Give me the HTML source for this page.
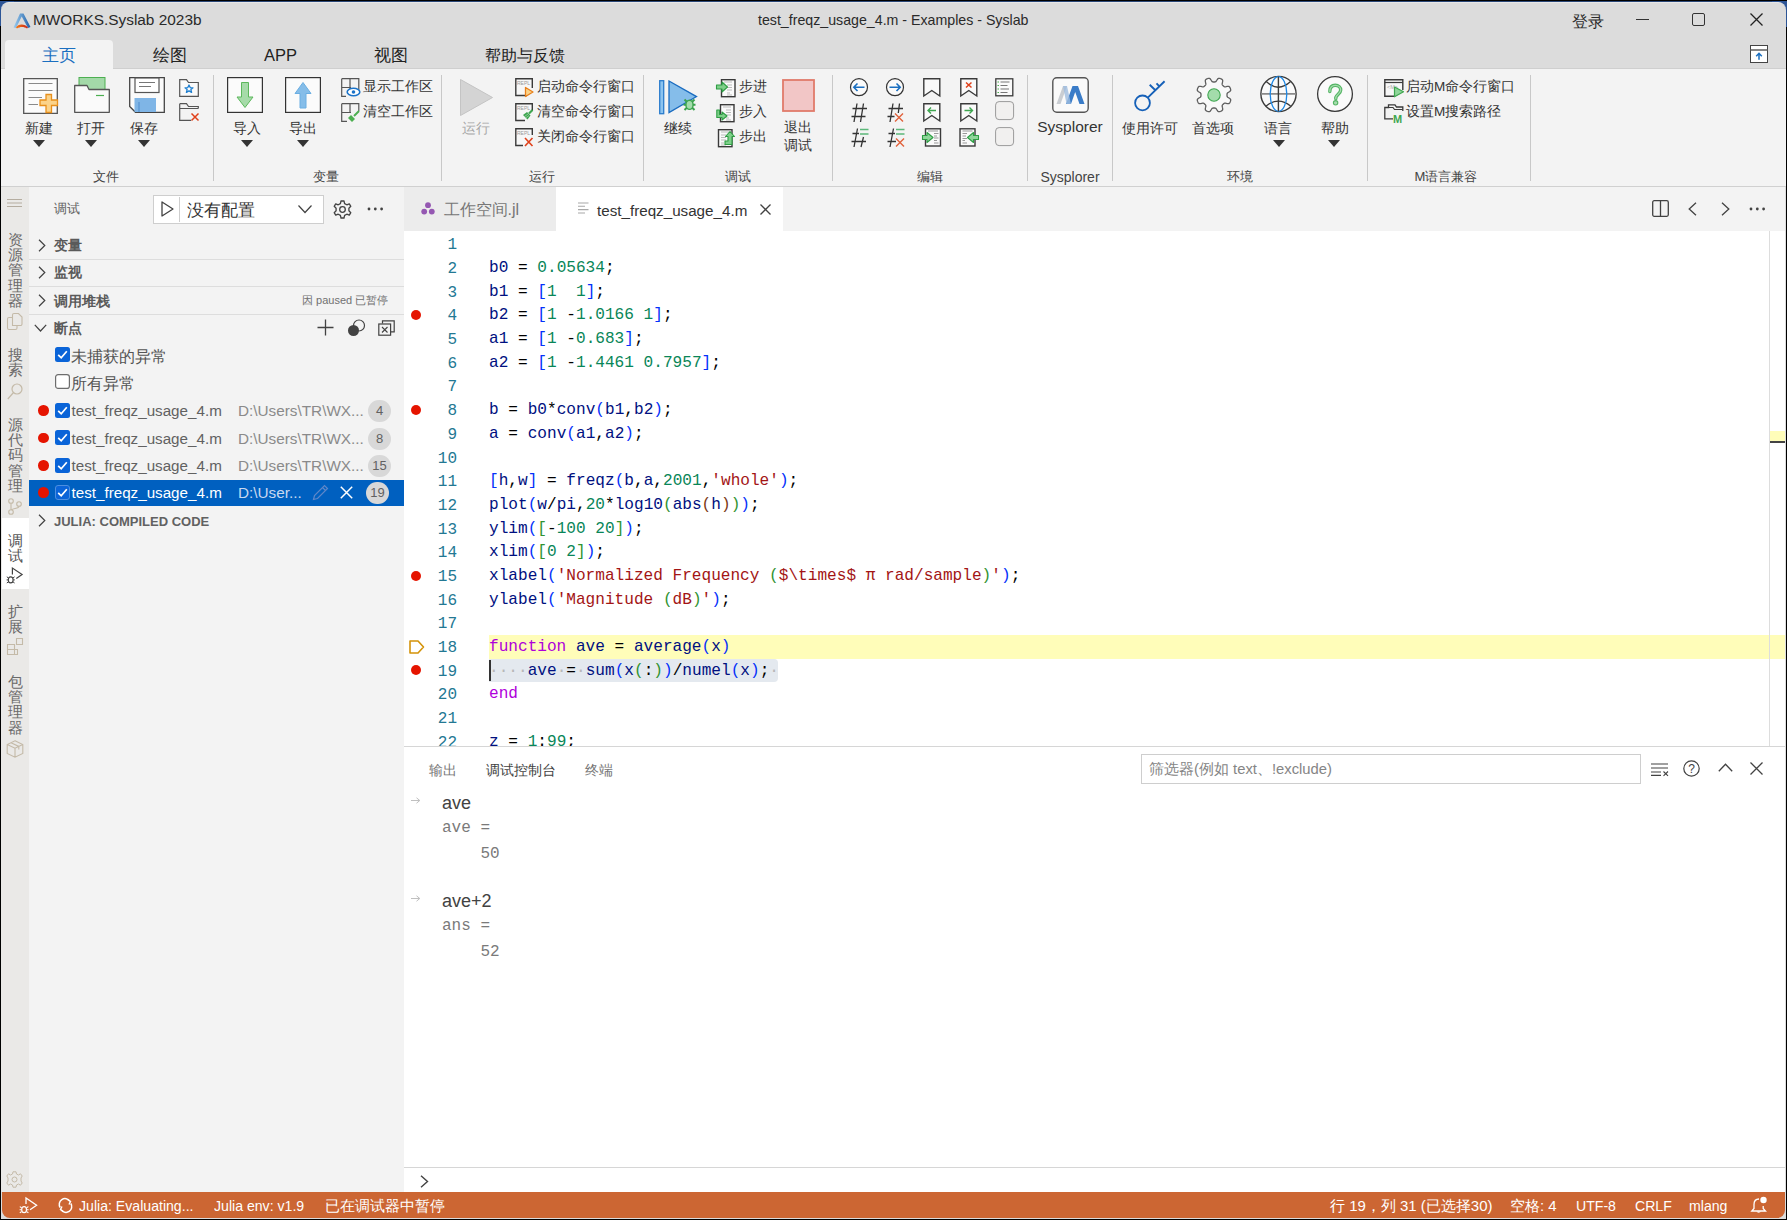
<!DOCTYPE html>
<html><head><meta charset="utf-8">
<style>
*{margin:0;padding:0;box-sizing:border-box}
html,body{width:1787px;height:1220px;overflow:hidden;background:#000}
body{font-family:"Liberation Sans",sans-serif;color:#222;position:relative}
.a{position:absolute}
.t{position:absolute;white-space:nowrap;line-height:1}
.c{position:absolute;white-space:nowrap;line-height:1;text-align:center;width:120px}
svg{position:absolute;overflow:visible}
.rib{font-size:13.5px;color:#333}
.gl{font-size:13px;color:#444}
.sep{position:absolute;width:1px;background:#c8c8c8;top:75px;height:106px}
.tri{position:absolute;width:0;height:0;border-left:6px solid transparent;border-right:6px solid transparent;border-top:7px solid #333}
.code{font-family:"Liberation Mono",monospace;font-size:16.1px;white-space:pre;position:absolute;left:489px;line-height:23.68px;height:23.68px}
.ln{font-family:"Liberation Mono",monospace;font-size:16px;position:absolute;width:60px;left:397px;text-align:right;color:#237893;line-height:23.68px}
.id{color:#001080}.nu{color:#098658}.br{color:#0431fa}.g2{color:#319331}.g3{color:#7b3814}.st{color:#a31515}.kw{color:#af00db}.pu{color:#000}.ws{color:#b8b8b8}
.bp{position:absolute;left:411px;width:10px;height:10px;border-radius:50%;background:#e51400}
</style></head><body>
<div class="a" style="left:0;top:1px;width:1787px;height:2px;background:#2a4878"></div>
<div class="a" style="left:0;top:1px;width:14px;height:25px;background:#2d5596"></div>
<div class="a" style="left:1772px;top:1px;width:15px;height:26px;background:#2d5596"></div>
<div class="a" style="left:1px;top:2px;width:1785px;height:1217px;background:#dcdcdc;border-radius:8px 8px 0 0;border-top:1px solid #e8e8e8"></div>
<!-- title bar -->
<svg style="left:13px;top:13px" width="18" height="17" viewBox="0 0 18 17">
 <defs><linearGradient id="lg1" x1="0" x2="1"><stop offset="0" stop-color="#9ccdf0"/><stop offset="1" stop-color="#1f5fa8"/></linearGradient>
 <linearGradient id="lg2" x1="0" x2="1"><stop offset="0" stop-color="#f57b14"/><stop offset="1" stop-color="#c8221b"/></linearGradient></defs>
 <path d="M7 0.5 L10.5 0.5 L17.5 14 L15 15 L8.7 3.5 L3 15 L0.5 14.5 Z" fill="url(#lg1)"/>
 <path d="M3 14.5 C5 10.5 12 10.5 15 14.5 L14 15.5 C11 13.5 7 13.5 4 15.5 Z" fill="url(#lg2)"/>
</svg>
<div class="t" style="left:33px;top:12px;font-size:15.4px;color:#2a2a2a">MWORKS.Syslab 2023b</div>
<div class="t" style="left:758px;top:13px;font-size:14.2px;color:#2a2a2a">test_freqz_usage_4.m - Examples - Syslab</div>
<div class="t" style="left:1572px;top:14px;font-size:16px;color:#2a2a2a">登录</div>
<div class="a" style="left:1636px;top:19px;width:13px;height:1px;background:#333"></div>
<div class="a" style="left:1692px;top:13px;width:13px;height:13px;border:1px solid #333;border-radius:2px"></div>
<svg style="left:1750px;top:13px" width="13" height="13"><path d="M0.5 0.5L12.5 12.5M12.5 0.5L0.5 12.5" stroke="#222" stroke-width="1.3"/></svg>
<!-- ribbon tabs -->
<div class="a" style="left:1px;top:68px;width:1785px;height:1px;background:#cfcfcf"></div>
<div class="a" style="left:5px;top:40px;width:108px;height:30px;background:#f3f3f3;border-radius:4px 4px 0 0"></div>
<div class="t" style="left:42px;top:46.5px;font-size:16.5px;color:#1a6fc0">主页</div>
<div class="t" style="left:153px;top:46.5px;font-size:16.5px;color:#222">绘图</div>
<div class="t" style="left:264px;top:47px;font-size:16.5px;color:#222">APP</div>
<div class="t" style="left:374px;top:46.5px;font-size:16.5px;color:#222">视图</div>
<div class="t" style="left:485px;top:47px;font-size:16.4px;color:#222">帮助与反馈</div>
<svg style="left:1750px;top:45px" width="18" height="18" viewBox="0 0 18 18"><rect x="0.5" y="0.5" width="17" height="17" fill="#fff" stroke="#444"/><path d="M0.5 5H17.5" stroke="#666" stroke-width="1.6"/><path d="M9 14.8V8.3M6.2 11.2L9 8.3L11.8 11.2" stroke="#1a6fc0" stroke-width="1.5" fill="none"/></svg>
<!-- ribbon body -->
<div class="a" style="left:1px;top:69px;width:1785px;height:118px;background:#f3f3f3;border-bottom:1px solid #d0d0d0"></div>
<div class="sep" style="left:213px"></div>
<div class="sep" style="left:441px"></div>
<div class="sep" style="left:643px"></div>
<div class="sep" style="left:832px"></div>
<div class="sep" style="left:1027px"></div>
<div class="sep" style="left:1112px"></div>
<div class="sep" style="left:1367px"></div>
<div class="sep" style="left:1530px"></div>
<!-- group labels -->
<div class="c gl" style="left:46px;top:170px">文件</div>
<div class="c gl" style="left:266px;top:170px">变量</div>
<div class="c gl" style="left:482px;top:170px">运行</div>
<div class="c gl" style="left:678px;top:170px">调试</div>
<div class="c gl" style="left:870px;top:170px">编辑</div>
<div class="c gl" style="left:1010px;top:169.5px;font-size:14px">Sysplorer</div>
<div class="c gl" style="left:1180px;top:170px">环境</div>
<div class="c gl" style="left:1386px;top:170px">M语言兼容</div>
<!-- file group -->
<svg style="left:23px;top:78px" width="36" height="36" viewBox="0 0 36 36">
 <path d="M0.7 0.7H34.3V35.3H0.7Z" fill="#fbfbfb" stroke="#555" stroke-width="1.3"/>
 <path d="M5.5 5.5H29.5M5.5 12.5H29.5M5.5 19.5H19M5.5 26.5H15" stroke="#8a8a8a" stroke-width="1.2"/>
 <path d="M23 16.5H28.5V22H34.5V27.5H28.5V34.5H23V27.5H17V22H23Z" fill="#fbd38a" stroke="#e8901c" stroke-width="1.3"/>
</svg>
<svg style="left:74px;top:77px" width="36" height="36" viewBox="0 0 36 36">
 <rect x="5" y="0.5" width="26" height="12" fill="#a3d9a8" stroke="#4caf50" stroke-width="1"/>
 <path d="M0.7 8.5H13L15 12.5H35.3V35.3H0.7Z" fill="#fafafa" stroke="#555" stroke-width="1.3" stroke-linejoin="round"/>
 <path d="M22 18.5H30" stroke="#4caf50" stroke-width="1.2"/>
</svg>
<svg style="left:129px;top:77px" width="36" height="36" viewBox="0 0 36 36">
 <path d="M0.7 0.7H35.3V35.3H6.5L0.7 29.5Z" fill="#fafafa" stroke="#444" stroke-width="1.3"/>
 <rect x="6" y="1" width="24" height="14.5" fill="#fff" stroke="#555" stroke-width="1.2"/>
 <path d="M10 5.5H26M10 9.5H22" stroke="#777" stroke-width="1.1"/>
 <rect x="5.5" y="21" width="21.5" height="14" fill="#7fb5e6"/>
 <path d="M10 25V35" stroke="#5e9bd6" stroke-width="1.5"/>
</svg>
<svg style="left:179px;top:79px" width="20" height="19" viewBox="0 0 20 19">
 <path d="M0.7 0.7H7.5L9.5 3.5H19.3V17.3H0.7Z" fill="#fafafa" stroke="#555" stroke-width="1.2"/>
 <path d="M10 6L11.2 8.6L14 8.8L11.9 10.6L12.6 13.4L10 11.9L7.4 13.4L8.1 10.6L6 8.8L8.8 8.6Z" fill="none" stroke="#1e7fd0" stroke-width="1.3" stroke-linejoin="round"/>
</svg>
<svg style="left:179px;top:103px" width="20" height="19" viewBox="0 0 20 19">
 <path d="M0.7 0.7H7.5L9.5 3.5H19.3V5.5M19.3 5.5H0.7M0.7 0.7V17.3H12" fill="none" stroke="#555" stroke-width="1.2"/>
 <path d="M12.5 10.5L19.5 17.5M19.5 10.5L12.5 17.5" stroke="#e0401a" stroke-width="1.5"/>
</svg>
<div class="c rib" style="left:-21px;top:121.5px">新建</div>
<div class="c rib" style="left:31px;top:121.5px">打开</div>
<div class="c rib" style="left:84px;top:121.5px">保存</div>
<div class="tri" style="left:33px;top:140px"></div>
<div class="tri" style="left:85px;top:140px"></div>
<div class="tri" style="left:138px;top:140px"></div>
<!-- variable group -->
<svg style="left:227px;top:77px" width="36" height="36" viewBox="0 0 36 36">
 <rect x="0.6" y="0.6" width="34.8" height="34.8" fill="#fbfbfb" stroke="#333" stroke-width="1.2"/>
 <path d="M14.5 5.5H21.5V20H26L18 30.5L10 20H14.5Z" fill="#a6dba9" stroke="#5cb85c" stroke-width="1"/>
</svg>
<svg style="left:285px;top:77px" width="36" height="36" viewBox="0 0 36 36">
 <rect x="0.6" y="0.6" width="34.8" height="34.8" fill="#fbfbfb" stroke="#333" stroke-width="1.2"/>
 <path d="M15 31H21V16.5H26L18 5.5L10 16.5H15Z" fill="#85bde9" stroke="#6aaee2" stroke-width="1"/>
</svg>
<svg style="left:341px;top:78px" width="19" height="19" viewBox="0 0 19 19">
 <path d="M0.7 0.7H17.8V12M0.7 0.7V18.3H5M9 0.7V12M0.7 9.5H10" fill="none" stroke="#555" stroke-width="1.2"/>
 <ellipse cx="12.5" cy="14" rx="6.3" ry="3.8" fill="#fff" stroke="#1a73c9" stroke-width="1.6"/>
 <circle cx="12.5" cy="14" r="1.8" fill="#1a73c9"/>
</svg>
<svg style="left:341px;top:103px" width="19" height="19" viewBox="0 0 19 19">
 <path d="M0.7 0.7H17.8V8M0.7 0.7V18.3H6M9 0.7V10M0.7 9.5H10" fill="none" stroke="#555" stroke-width="1.2"/>
 <path d="M10 12L14 16L11 19L7 15Z" fill="#4caf50"/><path d="M13 13L18 8" stroke="#4caf50" stroke-width="2"/>
</svg>
<div class="t rib" style="left:363px;top:79.5px">显示工作区</div>
<div class="t rib" style="left:363px;top:105px">清空工作区</div>
<div class="c rib" style="left:187px;top:121.5px">导入</div>
<div class="c rib" style="left:243px;top:121.5px">导出</div>
<div class="tri" style="left:241px;top:140px"></div>
<div class="tri" style="left:297px;top:140px"></div>
<!-- run group -->
<svg style="left:460px;top:79px" width="33" height="37" viewBox="0 0 33 37"><path d="M0.5 0.5L32.5 18.5L0.5 36.5Z" fill="#d4d4d4" stroke="#c4c4c4"/></svg>
<div class="c rib" style="left:416px;top:121.5px;color:#a8a8a8">运行</div>
<svg style="left:515px;top:78px" width="19" height="20" viewBox="0 0 19 20">
 <path d="M12 17.5H0.8V0.8H17.3V10" fill="#f7f7f7" stroke="#3a3a3a" stroke-width="1.4"/>
 <text x="2" y="7" font-family="Liberation Sans" font-size="5" fill="#999">REPL</text>
 <path d="M10.5 9.5L18 14L10.5 18.5Z" fill="#fbd38a" stroke="#e8801c" stroke-width="1.3" stroke-linejoin="round"/>
</svg>
<svg style="left:515px;top:103px" width="19" height="20" viewBox="0 0 19 20">
 <path d="M10 17.5H0.8V0.8H17.3V8" fill="#f7f7f7" stroke="#3a3a3a" stroke-width="1.4"/>
 <text x="2" y="7" font-family="Liberation Sans" font-size="5" fill="#999">REPL</text>
 <path d="M8 12L12 9L15.5 12.5L12.5 16.5Z" fill="#3fa650"/><path d="M14 10.5L17.5 7" stroke="#3fa650" stroke-width="2.2"/>
 <path d="M9.5 13.5L13 11M10.5 15L14 12.5" stroke="#b8e0be" stroke-width="0.6"/>
</svg>
<svg style="left:515px;top:128px" width="19" height="20" viewBox="0 0 19 20">
 <path d="M8 17.5H0.8V0.8H17.3V7" fill="#f7f7f7" stroke="#3a3a3a" stroke-width="1.4"/>
 <text x="2" y="7" font-family="Liberation Sans" font-size="5" fill="#999">REPL</text>
 <path d="M10 10L17.5 18M17.5 10L10 18" stroke="#e0401a" stroke-width="1.6"/>
</svg>

<div class="t rib" style="left:537px;top:79.5px">启动命令行窗口</div>
<div class="t rib" style="left:537px;top:105px">清空命令行窗口</div>
<div class="t rib" style="left:537px;top:129.5px">关闭命令行窗口</div>
<!-- debug group -->
<svg style="left:659px;top:80px" width="40" height="36" viewBox="0 0 40 36">
 <rect x="0.7" y="0.7" width="4" height="33" fill="#8cc4f0" stroke="#2a7ccc" stroke-width="1.3"/>
 <path d="M10 1L37.5 16.6L10 32.6Z" fill="#85bdea" stroke="#1a6cc0" stroke-width="1.3" stroke-linejoin="miter"/>
 <path d="M25.5 19.5L28 22M35.5 19.5L33 22M24.5 24.8H27M36.5 24.8H34M25.5 30L28 27.5M35.5 30L33 27.5" stroke="#3aa34c" stroke-width="2"/>
 <ellipse cx="30.5" cy="24.8" rx="3.6" ry="4.6" fill="#a3dcab" stroke="#3aa34c" stroke-width="1.4"/>
</svg>
<div class="c rib" style="left:618px;top:121.5px">继续</div>
<svg style="left:716px;top:79px" width="20" height="19" viewBox="0 0 20 19">
 <rect x="5.5" y="0.7" width="13.5" height="17" fill="#fafafa" stroke="#3a3a3a" stroke-width="1.4"/>
 <path d="M8 3H16M11 6H16M11 8.5H16M11 11H16M11 14H14M11 16H16" stroke="#bbb" stroke-width="1"/>
 <path d="M0.5 6H6V3L11.5 8L6 13V10H0.5Z" fill="#7fcf8a" stroke="#2e9e44" stroke-width="1.1" stroke-linejoin="round"/>
</svg>
<svg style="left:716px;top:104px" width="20" height="19" viewBox="0 0 20 19">
 <rect x="4.5" y="0.7" width="13.5" height="17" fill="#fafafa" stroke="#3a3a3a" stroke-width="1.4"/>
 <path d="M7 3H15M10 6H15M10 8.5H15M10 11H15M10 14H13M10 16H15" stroke="#bbb" stroke-width="1"/>
 <path d="M0.8 6H3.5V10.5H6V8L11 12L6 16V13.5H0.8Z" fill="#7fcf8a" stroke="#2e9e44" stroke-width="1.1" stroke-linejoin="round"/>
</svg>
<svg style="left:716px;top:129px" width="20" height="19" viewBox="0 0 20 19">
 <rect x="2.5" y="0.7" width="13.5" height="17" fill="#fafafa" stroke="#3a3a3a" stroke-width="1.4"/>
 <path d="M5 3H13M5 6H10M5 8.5H10M5 11H10M5 14H8M5 16H10" stroke="#bbb" stroke-width="1"/>
 <path d="M9 15.5V12H12V7.5H9.5L14 2.5L18.5 7.5H16V15.5Z" fill="#7fcf8a" stroke="#2e9e44" stroke-width="1.1" stroke-linejoin="round"/>
</svg>

<div class="t rib" style="left:739px;top:79.5px">步进</div>
<div class="t rib" style="left:739px;top:105px">步入</div>
<div class="t rib" style="left:739px;top:129.5px">步出</div>
<svg style="left:782px;top:79px" width="33" height="33" viewBox="0 0 33 33"><rect x="1" y="1" width="31" height="31" fill="#f2c6c6" stroke="#e07a6a" stroke-width="1.8"/></svg>
<div class="c rib" style="left:738px;top:120.5px">退出</div>
<div class="c rib" style="left:738px;top:138.5px">调试</div>
<svg style="left:850px;top:78px" width="19" height="19" viewBox="0 0 19 19">
 <circle cx="9" cy="9.2" r="8.5" fill="#fafafa" stroke="#333" stroke-width="1.2"/>
 <path d="M14.5 9.2H4M7.5 5.5L3.8 9.2L7.5 13" fill="none" stroke="#1a6fc0" stroke-width="1.6"/>
</svg>
<svg style="left:886px;top:78px" width="19" height="19" viewBox="0 0 19 19">
 <circle cx="9" cy="9.2" r="8.5" fill="#fafafa" stroke="#333" stroke-width="1.2"/>
 <path d="M3.5 9.2H14M10.5 5.5L14.2 9.2L10.5 13" fill="none" stroke="#1a6fc0" stroke-width="1.6"/>
</svg>
<svg style="left:923px;top:78px" width="18" height="19" viewBox="0 0 18 19">
 <path d="M0.8 0.8H16.8V18L8.8 12.5L0.8 18Z" fill="#fafafa" stroke="#3a3a3a" stroke-width="1.4" stroke-linejoin="miter"/>
</svg>
<svg style="left:960px;top:78px" width="18" height="19" viewBox="0 0 18 19">
 <path d="M0.8 0.8H16.8V18L8.8 12.5L0.8 18Z" fill="#fafafa" stroke="#3a3a3a" stroke-width="1.4"/>
 <path d="M6 4.5L11.5 9.5M11.5 4.5L6 9.5" stroke="#e0401a" stroke-width="1.5"/>
</svg>
<svg style="left:995px;top:78px" width="19" height="19" viewBox="0 0 19 19">
 <rect x="0.8" y="0.8" width="17" height="17" fill="#fafafa" stroke="#3a3a3a" stroke-width="1.3"/>
 <path d="M5.5 4H14.5M5.5 7.5H12.5M5.5 11H14M5.5 14.5H12.5" stroke="#777" stroke-width="1.2"/>
 <path d="M2.5 4H4M2.5 7.5H4M2.5 11H4M2.5 14.5H4" stroke="#4caf50" stroke-width="1.2"/>
</svg>
<svg style="left:851px;top:103px" width="17" height="20" viewBox="0 0 17 20">
 <path d="M6 0.5L3 19M12.5 0.5L9.5 19M1.5 5.5H16M0.5 13.5H14.5" stroke="#333" stroke-width="1.3"/>
</svg>
<svg style="left:887px;top:103px" width="18" height="20" viewBox="0 0 18 20">
 <path d="M6 0.5L3 19M12.5 0.5L11.3 10M1.5 5.5H16M0.5 13.5H7.5" stroke="#333" stroke-width="1.3"/>
 <path d="M8 10.5L16 18.5M16 10.5L8 18.5" stroke="#e0603a" stroke-width="1.4"/>
</svg>
<svg style="left:923px;top:103px" width="18" height="19" viewBox="0 0 18 19">
 <path d="M0.8 0.8H16.8V18L8.8 12.5L0.8 18Z" fill="#fafafa" stroke="#3a3a3a" stroke-width="1.4"/>
 <path d="M13 7.5H5M8 4.5L5 7.5L8 10.5" fill="none" stroke="#3fa650" stroke-width="1.4"/>
</svg>
<svg style="left:960px;top:103px" width="18" height="19" viewBox="0 0 18 19">
 <path d="M0.8 0.8H16.8V18L8.8 12.5L0.8 18Z" fill="#fafafa" stroke="#3a3a3a" stroke-width="1.4"/>
 <path d="M4.5 7.5H12.5M9.5 4.5L12.5 7.5L9.5 10.5" fill="none" stroke="#3fa650" stroke-width="1.4"/>
</svg>
<svg style="left:995px;top:101px" width="19" height="19" viewBox="0 0 19 19">
 <rect x="0.6" y="0.6" width="18" height="18" rx="3.5" fill="#f1f0ef" stroke="#9a9a9a" stroke-width="1"/>
</svg>
<svg style="left:851px;top:128px" width="18" height="20" viewBox="0 0 18 20">
 <path d="M6.5 0.5L3 19M12.5 9L10 19M1.5 5.5H8M0.5 13.5H15" stroke="#333" stroke-width="1.3"/>
 <path d="M9 1.5H17.5M9 6H17.5" stroke="#5cb87a" stroke-width="1.6"/>
</svg>
<svg style="left:887px;top:128px" width="18" height="20" viewBox="0 0 18 20">
 <path d="M6.5 0.5L3 19M1.5 5.5H8M0.5 13.5H9" stroke="#333" stroke-width="1.3"/>
 <path d="M9 1.5H17.5M9 6H17.5" stroke="#5cb87a" stroke-width="1.6"/>
 <path d="M9 10.5L17 18.5M17 10.5L9 18.5" stroke="#e0603a" stroke-width="1.4"/>
</svg>
<svg style="left:922px;top:128px" width="20" height="19" viewBox="0 0 20 19">
 <rect x="3.5" y="0.8" width="15" height="17.2" fill="#fafafa" stroke="#3a3a3a" stroke-width="1.4"/>
 <path d="M6 3H16M12 5.5H16.5M12 8H15M12 10H16.5M12 12.5H15M12 15H16.5" stroke="#999" stroke-width="1"/>
 <path d="M0.5 7.5H5V4.5L11 9.5L5 14.5V11.5H0.5Z" fill="#8fd69a" stroke="#2e9e44" stroke-width="1.1" stroke-linejoin="round"/>
</svg>
<svg style="left:959px;top:128px" width="20" height="19" viewBox="0 0 20 19">
 <rect x="1" y="0.8" width="15" height="17.2" fill="#fafafa" stroke="#3a3a3a" stroke-width="1.4"/>
 <path d="M3.5 3H13.5M3.5 5.5H8M3.5 8H7M3.5 10.5H8M3.5 12.5H6M3.5 15H8" stroke="#999" stroke-width="1"/>
 <path d="M19.5 7.5H14.5V4.5L8.5 9.5L14.5 14.5V11.5H19.5Z" fill="#8fd69a" stroke="#2e9e44" stroke-width="1.1" stroke-linejoin="round"/>
</svg>
<svg style="left:995px;top:127px" width="19" height="19" viewBox="0 0 19 19">
 <rect x="0.6" y="0.6" width="18" height="18" rx="3.5" fill="#f1f0ef" stroke="#9a9a9a" stroke-width="1"/>
</svg>

<!-- sysplorer -->
<svg style="left:1052px;top:77px" width="37" height="36" viewBox="0 0 37 36">
 <rect x="0.8" y="0.8" width="35.4" height="34.4" rx="4" fill="#fafafa" stroke="#555" stroke-width="1.4"/>
 <path d="M4.5 27L11 9H15L8.5 27Z" fill="#c9cdd2"/>
 <path d="M14 27L20.5 9H26L32.5 27H27.5L23.2 15L19 27Z" fill="#3a7cc8"/>
 <path d="M11 9H15L19 27H14.5Z" fill="#9fbde0" opacity="0.8"/>
</svg>
<div class="c rib" style="left:1010px;top:118.5px;font-size:15.5px;color:#333">Sysplorer</div>
<svg style="left:1133px;top:80px" width="34" height="33" viewBox="0 0 34 33">
 <circle cx="9.5" cy="22.9" r="7.4" fill="none" stroke="#1560b8" stroke-width="1.8"/>
 <path d="M14.8 17.6L31.6 1.3M22.4 10.2L16.7 4.8M26.4 6.4L23.5 3.3" fill="none" stroke="#1560b8" stroke-width="1.9"/>
</svg>
<svg style="left:1195.5px;top:77.3px" width="36" height="36" viewBox="0 0 36 36">
 <path d="M31.00 18.00 L31.00 18.34 L31.01 18.68 L31.03 19.03 L31.11 19.38 L31.30 19.75 L31.73 20.18 L32.52 20.69 L33.49 21.29 L34.23 21.90 L34.60 22.45 L34.70 22.95 L34.67 23.42 L34.57 23.87 L34.43 24.31 L34.26 24.74 L34.07 25.16 L33.86 25.57 L33.62 25.96 L33.31 26.31 L32.88 26.59 L32.23 26.72 L31.28 26.62 L30.17 26.36 L29.25 26.17 L28.64 26.17 L28.24 26.29 L27.94 26.49 L27.68 26.72 L27.43 26.95 L27.19 27.19 L26.95 27.43 L26.72 27.68 L26.49 27.94 L26.29 28.24 L26.17 28.64 L26.17 29.25 L26.36 30.17 L26.62 31.28 L26.72 32.23 L26.59 32.88 L26.31 33.31 L25.96 33.62 L25.57 33.86 L25.16 34.07 L24.74 34.26 L24.31 34.43 L23.87 34.57 L23.42 34.67 L22.95 34.70 L22.45 34.60 L21.90 34.23 L21.29 33.49 L20.69 32.52 L20.18 31.73 L19.75 31.30 L19.38 31.11 L19.03 31.03 L18.68 31.01 L18.34 31.00 L18.00 31.00 L17.66 31.00 L17.32 31.01 L16.97 31.03 L16.62 31.11 L16.25 31.30 L15.82 31.73 L15.31 32.52 L14.71 33.49 L14.10 34.23 L13.55 34.60 L13.05 34.70 L12.58 34.67 L12.13 34.57 L11.69 34.43 L11.26 34.26 L10.84 34.07 L10.43 33.86 L10.04 33.62 L9.69 33.31 L9.41 32.88 L9.28 32.23 L9.38 31.28 L9.64 30.17 L9.83 29.25 L9.83 28.64 L9.71 28.24 L9.51 27.94 L9.28 27.68 L9.05 27.43 L8.81 27.19 L8.57 26.95 L8.32 26.72 L8.06 26.49 L7.76 26.29 L7.36 26.17 L6.75 26.17 L5.83 26.36 L4.72 26.62 L3.77 26.72 L3.12 26.59 L2.69 26.31 L2.38 25.96 L2.14 25.57 L1.93 25.16 L1.74 24.74 L1.57 24.31 L1.43 23.87 L1.33 23.42 L1.30 22.95 L1.40 22.45 L1.77 21.90 L2.51 21.29 L3.48 20.69 L4.27 20.18 L4.70 19.75 L4.89 19.38 L4.97 19.03 L4.99 18.68 L5.00 18.34 L5.00 18.00 L5.00 17.66 L4.99 17.32 L4.97 16.97 L4.89 16.62 L4.70 16.25 L4.27 15.82 L3.48 15.31 L2.51 14.71 L1.77 14.10 L1.40 13.55 L1.30 13.05 L1.33 12.58 L1.43 12.13 L1.57 11.69 L1.74 11.26 L1.93 10.84 L2.14 10.43 L2.38 10.04 L2.69 9.69 L3.12 9.41 L3.77 9.28 L4.72 9.38 L5.83 9.64 L6.75 9.83 L7.36 9.83 L7.76 9.71 L8.06 9.51 L8.32 9.28 L8.57 9.05 L8.81 8.81 L9.05 8.57 L9.28 8.32 L9.51 8.06 L9.71 7.76 L9.83 7.36 L9.83 6.75 L9.64 5.83 L9.38 4.72 L9.28 3.77 L9.41 3.12 L9.69 2.69 L10.04 2.38 L10.43 2.14 L10.84 1.93 L11.26 1.74 L11.69 1.57 L12.13 1.43 L12.58 1.33 L13.05 1.30 L13.55 1.40 L14.10 1.77 L14.71 2.51 L15.31 3.48 L15.82 4.27 L16.25 4.70 L16.62 4.89 L16.97 4.97 L17.32 4.99 L17.66 5.00 L18.00 5.00 L18.34 5.00 L18.68 4.99 L19.03 4.97 L19.38 4.89 L19.75 4.70 L20.18 4.27 L20.69 3.48 L21.29 2.51 L21.90 1.77 L22.45 1.40 L22.95 1.30 L23.42 1.33 L23.87 1.43 L24.31 1.57 L24.74 1.74 L25.16 1.93 L25.57 2.14 L25.96 2.38 L26.31 2.69 L26.59 3.12 L26.72 3.77 L26.62 4.72 L26.36 5.83 L26.17 6.75 L26.17 7.36 L26.29 7.76 L26.49 8.06 L26.72 8.32 L26.95 8.57 L27.19 8.81 L27.43 9.05 L27.68 9.28 L27.94 9.51 L28.24 9.71 L28.64 9.83 L29.25 9.83 L30.17 9.64 L31.28 9.38 L32.23 9.28 L32.88 9.41 L33.31 9.69 L33.62 10.04 L33.86 10.43 L34.07 10.84 L34.26 11.26 L34.43 11.69 L34.57 12.13 L34.67 12.58 L34.70 13.05 L34.60 13.55 L34.23 14.10 L33.49 14.71 L32.52 15.31 L31.73 15.82 L31.30 16.25 L31.11 16.62 L31.03 16.97 L31.01 17.32 L31.00 17.66Z" fill="#f9f9f9" stroke="#5f5f5f" stroke-width="1.3" stroke-linejoin="round"/>
 <circle cx="18" cy="18" r="6.2" fill="#a3dcab" stroke="#3fa650" stroke-width="1.1"/>
</svg>
<svg style="left:1260px;top:76px" width="37" height="37" viewBox="0 0 37 37">
 <circle cx="18.5" cy="18" r="17.6" fill="#fafafa" stroke="#3a3a3a" stroke-width="1.4"/>
 <path d="M1 17.9H36" stroke="#8a8a8a" stroke-width="1.8"/>
 <path d="M6.2 5.6Q18.4 16.8 30.6 5.6M6.2 29.9Q18.4 20.2 30.6 29.9" fill="none" stroke="#3a3a3a" stroke-width="1.3"/>
 <ellipse cx="18.5" cy="18" rx="8.3" ry="17.4" fill="none" stroke="#1e88e5" stroke-width="1.3"/>
 <path d="M18.4 0.5V35.5" stroke="#3a3a3a" stroke-width="1.4"/>
</svg>
<svg style="left:1317px;top:76px" width="37" height="37" viewBox="0 0 37 37">
 <circle cx="18" cy="18" r="17.4" fill="#fafafa" stroke="#3a3a3a" stroke-width="1.3"/>
 <path d="M12.8 15.5C12.8 11.5 15 9.3 18.3 9.3C21.6 9.3 23.7 11.4 23.7 14C23.7 17.3 19.5 18.5 18.8 21.5V22.8" fill="none" stroke="#55b565" stroke-width="3.4" stroke-linecap="round"/>
 <path d="M12.8 15.5C12.8 11.5 15 9.3 18.3 9.3C21.6 9.3 23.7 11.4 23.7 14C23.7 17.3 19.5 18.5 18.8 21.5V22.8" fill="none" stroke="#a6ddae" stroke-width="1.3" stroke-linecap="round"/>
 <circle cx="18.6" cy="26.8" r="2.2" fill="#a6ddae" stroke="#55b565" stroke-width="1.1"/>
</svg>

<div class="c rib" style="left:1090px;top:121.5px">使用许可</div>
<div class="c rib" style="left:1153px;top:121.5px">首选项</div>
<div class="c rib" style="left:1218px;top:121.5px">语言</div>
<div class="c rib" style="left:1275px;top:121.5px">帮助</div>
<div class="tri" style="left:1273px;top:140px"></div>
<div class="tri" style="left:1328px;top:140px"></div>
<svg style="left:1384px;top:79px" width="21" height="19" viewBox="0 0 21 19">
 <path d="M11 17.3H0.8V0.8H18.8V11" fill="#f7f7f7" stroke="#3a3a3a" stroke-width="1.4"/>
 <path d="M0.8 3.5H18.8" stroke="#3a3a3a" stroke-width="1.2"/>
 <text x="3" y="10" font-family="Liberation Sans" font-size="5.5" fill="#aaa">&lt;M&gt;</text>
 <path d="M10.5 8L19.5 12.8L10.5 17.8Z" fill="#8fd69a" stroke="#3fa650" stroke-width="1.2" stroke-linejoin="round"/>
</svg>
<svg style="left:1384px;top:104px" width="21" height="19" viewBox="0 0 21 19">
 <path d="M9 14.8H0.8V3.5H4.5V0.8H11L12.5 3H18.8V7" fill="none" stroke="#3a3a3a" stroke-width="1.3"/>
 <path d="M4.5 3.5H9L10.5 5.5H18.8" fill="none" stroke="#3a3a3a" stroke-width="1.2"/>
 <text x="9" y="18.5" font-family="Liberation Sans" font-weight="bold" font-size="11" fill="#3fa650">M</text>
</svg>

<div class="t rib" style="left:1406px;top:79.5px">启动M命令行窗口</div>
<div class="t rib" style="left:1406px;top:105px">设置M搜索路径</div>
<!-- activity bar -->
<div class="a" style="left:1px;top:187px;width:28px;height:1005px;background:#eae9e7"></div>
<div class="a" style="left:2px;top:518px;width:27px;height:71px;background:#ffffff"></div>
<svg style="left:7px;top:198px" width="16" height="10"><path d="M0 1.5H15M0 5H15M0 8.5H15" stroke="#b5ada0" stroke-width="1"/></svg>
<div class="a act" style="left:8px;top:232px;width:16px;font-size:15px;line-height:15.2px;color:#6a6a6a;word-break:break-all">资源管理器</div>
<svg style="left:7px;top:313px" width="16" height="17" viewBox="0 0 16 17"><path d="M5.5 12.5V2A1.5 1.5 0 0 1 7 0.5H11.5L15 4V11A1.5 1.5 0 0 1 13.5 12.5Z" fill="none" stroke="#c4baa8" stroke-width="1.1"/><path d="M5.5 4.5H2A1.5 1.5 0 0 0 0.5 6V15A1.5 1.5 0 0 0 2 16.5H8.5A1.5 1.5 0 0 0 10 15V12.5" fill="none" stroke="#c4baa8" stroke-width="1.1"/></svg>
<div class="a act" style="left:8px;top:347px;width:16px;font-size:15px;line-height:15.2px;color:#6a6a6a;word-break:break-all">搜索</div>
<svg style="left:7px;top:383px" width="16" height="17" viewBox="0 0 16 17"><circle cx="10" cy="6" r="5" fill="none" stroke="#c4baa8" stroke-width="1.2"/><path d="M6.5 9.5L0.8 16" stroke="#c4baa8" stroke-width="1.2"/></svg>
<div class="a act" style="left:8px;top:417px;width:16px;font-size:15px;line-height:15.2px;color:#6a6a6a;word-break:break-all">源代码管理</div>
<svg style="left:7px;top:498px" width="16" height="17" viewBox="0 0 16 17"><circle cx="4" cy="3" r="2.3" fill="none" stroke="#c4baa8" stroke-width="1.1"/><circle cx="4" cy="14" r="2.3" fill="none" stroke="#c4baa8" stroke-width="1.1"/><circle cx="12" cy="6" r="2.3" fill="none" stroke="#c4baa8" stroke-width="1.1"/><path d="M4 5.3V11.7M12 8.3C12 11 6 10 4.5 11.8" fill="none" stroke="#c4baa8" stroke-width="1.1"/></svg>
<div class="a act" style="left:8px;top:533px;width:16px;font-size:15px;line-height:15.2px;color:#555;word-break:break-all">调试</div>
<svg style="left:5px;top:566px" width="20" height="18" viewBox="0 0 20 18">
 <path d="M7.4 8.6V2.1L17.1 8.5L11.3 12.6" fill="none" stroke="#424242" stroke-width="1.2" stroke-linejoin="miter"/>
 <ellipse cx="5.7" cy="13.9" rx="2.4" ry="3" fill="none" stroke="#424242" stroke-width="1.1"/>
 <path d="M1.8 10.8L3.5 12M9.6 10.8L7.9 12M1.6 13.9H3.2M9.8 13.9H8.2M1.8 17L3.5 15.8M9.6 17L7.9 15.8" stroke="#424242" stroke-width="1"/>
</svg>
<div class="a act" style="left:8px;top:604px;width:16px;font-size:15px;line-height:15.2px;color:#6a6a6a;word-break:break-all">扩展</div>
<svg style="left:7px;top:638px" width="16" height="17" viewBox="0 0 16 17"><path d="M0.5 6.5H7.5V16.5H0.5ZM0.5 11.5H10.5V16.5H7.5M9.5 0.5H15.5V6.5H9.5Z M7.5 6.5" fill="none" stroke="#c4baa8" stroke-width="1.1"/></svg>
<div class="a act" style="left:8px;top:674px;width:16px;font-size:15px;line-height:15.2px;color:#6a6a6a;word-break:break-all">包管理器</div>
<svg style="left:6px;top:740px" width="18" height="18" viewBox="0 0 18 18"><path d="M9 0.8L16.8 4.5V13.5L9 17.2L1.2 13.5V4.5Z M1.2 4.5L9 8.2L16.8 4.5 M9 8.2V17.2 M5 2.7L12.8 6.4V9.5" fill="none" stroke="#c4baa8" stroke-width="1.1"/></svg>
<svg style="left:6px;top:1171px" width="17" height="17" viewBox="0 0 17 17"><circle cx="8.5" cy="8.5" r="2.5" fill="none" stroke="#c4baa8" stroke-width="1"/><path d="M7 0.8H10L10.5 3L12.5 4L14.5 2.8L16.2 5L15 7V10L16.2 12L14.5 14.2L12.5 13L10.5 14L10 16.2H7L6.5 14L4.5 13L2.5 14.2L0.8 12L2 10V7L0.8 5L2.5 2.8L4.5 4L6.5 3Z" fill="none" stroke="#c4baa8" stroke-width="1" stroke-linejoin="round"/></svg>
<!-- sidebar -->
<div class="a" style="left:29px;top:187px;width:375px;height:1005px;background:#f3f3f3"></div>
<div class="t" style="left:54px;top:202px;font-size:13px;color:#616161">调试</div>
<div class="a" style="left:153px;top:195px;width:171px;height:29px;background:#fff;border:1px solid #cecece"></div>
<svg style="left:161px;top:201px" width="13" height="16" viewBox="0 0 13 16"><path d="M1 1L12 8L1 15Z" fill="none" stroke="#424242" stroke-width="1.3" stroke-linejoin="round"/></svg>
<div class="a" style="left:179px;top:197px;width:1px;height:25px;background:#cecece"></div>
<div class="t" style="left:187px;top:201.5px;font-size:16.5px;color:#333">没有配置</div>
<svg style="left:298px;top:205px" width="14" height="9"><path d="M0.5 0.5L7 7.5L13.5 0.5" fill="none" stroke="#424242" stroke-width="1.2"/></svg>
<svg style="left:333px;top:200px" width="19" height="19" viewBox="0 0 19 19"><circle cx="9.5" cy="9.5" r="2.8" fill="none" stroke="#424242" stroke-width="1.3"/><path d="M8 1H11L11.6 3.6L13.8 4.8L16.3 3.8L17.8 6.3L15.9 8.2V10.8L17.8 12.7L16.3 15.2L13.8 14.2L11.6 15.4L11 18H8L7.4 15.4L5.2 14.2L2.7 15.2L1.2 12.7L3.1 10.8V8.2L1.2 6.3L2.7 3.8L5.2 4.8L7.4 3.6Z" fill="none" stroke="#424242" stroke-width="1.3" stroke-linejoin="round"/></svg>
<svg style="left:367px;top:207px" width="17" height="4"><circle cx="2" cy="2" r="1.4" fill="#424242"/><circle cx="8.3" cy="2" r="1.4" fill="#424242"/><circle cx="14.6" cy="2" r="1.4" fill="#424242"/></svg>
<div class="a" style="left:29px;top:259px;width:375px;height:1px;background:#dddddd"></div>
<div class="a" style="left:29px;top:286px;width:375px;height:1px;background:#dddddd"></div>
<div class="a" style="left:29px;top:314px;width:375px;height:1px;background:#dddddd"></div>
<svg style="left:38px;top:239px" width="8" height="13"><path d="M1 0.8L6.8 6.5L1 12.2" fill="none" stroke="#424242" stroke-width="1.2"/></svg>
<div class="t" style="left:54px;top:238.5px;font-size:13.5px;font-weight:bold;color:#5a5a5a">变量</div>
<svg style="left:38px;top:266px" width="8" height="13"><path d="M1 0.8L6.8 6.5L1 12.2" fill="none" stroke="#424242" stroke-width="1.2"/></svg>
<div class="t" style="left:54px;top:266px;font-size:13.5px;font-weight:bold;color:#5a5a5a">监视</div>
<svg style="left:38px;top:294px" width="8" height="13"><path d="M1 0.8L6.8 6.5L1 12.2" fill="none" stroke="#424242" stroke-width="1.2"/></svg>
<div class="t" style="left:54px;top:294.5px;font-size:13.5px;font-weight:bold;color:#5a5a5a">调用堆栈</div>
<div class="t" style="left:302px;top:294.5px;font-size:11px;color:#717171">因 paused 已暂停</div>
<svg style="left:34px;top:324px" width="14" height="9"><path d="M0.8 0.8L6.5 7L12.2 0.8" fill="none" stroke="#424242" stroke-width="1.2"/></svg>
<div class="t" style="left:54px;top:321.5px;font-size:13.5px;font-weight:bold;color:#5a5a5a">断点</div>
<svg style="left:317px;top:319px" width="17" height="17"><path d="M8.5 0.5V16.5M0.5 8.5H16.5" stroke="#424242" stroke-width="1.3"/></svg>
<svg style="left:347px;top:319px" width="19" height="18" viewBox="0 0 19 18"><circle cx="12" cy="6.5" r="5.5" fill="none" stroke="#424242" stroke-width="1.2"/><circle cx="6.5" cy="11.5" r="5.5" fill="#424242"/></svg>
<svg style="left:378px;top:320px" width="17" height="16" viewBox="0 0 17 16"><path d="M4.5 3.5V0.8H16.2V11.8H13" fill="none" stroke="#424242" stroke-width="1.2"/><rect x="0.8" y="4" width="11.8" height="11.2" fill="none" stroke="#424242" stroke-width="1.2"/><path d="M4 7L9.5 12.5M9.5 7L4 12.5" stroke="#424242" stroke-width="1.1"/></svg>
<!-- checkboxes -->
<svg style="left:55px;top:347px" width="15" height="15"><rect x="0" y="0" width="15" height="15" rx="2.5" fill="#0a64d8"/><path d="M3.2 7.8L6.2 10.8L11.8 4.2" fill="none" stroke="#fff" stroke-width="1.7"/></svg>
<div class="t" style="left:71px;top:347.5px;font-size:16.2px;color:#555">未捕获的异常</div>
<svg style="left:55px;top:374px" width="15" height="15"><rect x="0.6" y="0.6" width="13.8" height="13.8" rx="2.5" fill="#fff" stroke="#6d6d6d" stroke-width="1.2"/></svg>
<div class="t" style="left:71px;top:374.5px;font-size:16.2px;color:#555">所有异常</div>
<div class="a" style="left:38px;top:405.0px;width:10.5px;height:10.5px;border-radius:50%;background:#e51400"></div>
<svg style="left:55px;top:402.5px" width="15" height="15"><rect x="0" y="0" width="15" height="15" rx="2.5" fill="#0a64d8"/><path d="M3.2 7.8L6.2 10.8L11.8 4.2" fill="none" stroke="#fff" stroke-width="1.7"/></svg>
<div class="t" style="left:71.5px;top:403.0px;font-size:15.2px;color:#616161">test_freqz_usage_4.m</div>
<div class="t" style="left:238px;top:403.0px;font-size:15.3px;color:#8a8a8a">D:\Users\TR\WX...</div>
<div class="a" style="left:368px;top:400.0px;width:23px;height:22px;border-radius:11px;background:#d8d8d8;color:#616161;font-size:13px;line-height:22px;text-align:center">4</div>
<div class="a" style="left:38px;top:432.5px;width:10.5px;height:10.5px;border-radius:50%;background:#e51400"></div>
<svg style="left:55px;top:430px" width="15" height="15"><rect x="0" y="0" width="15" height="15" rx="2.5" fill="#0a64d8"/><path d="M3.2 7.8L6.2 10.8L11.8 4.2" fill="none" stroke="#fff" stroke-width="1.7"/></svg>
<div class="t" style="left:71.5px;top:430.5px;font-size:15.2px;color:#616161">test_freqz_usage_4.m</div>
<div class="t" style="left:238px;top:430.5px;font-size:15.3px;color:#8a8a8a">D:\Users\TR\WX...</div>
<div class="a" style="left:368px;top:427.5px;width:23px;height:22px;border-radius:11px;background:#d8d8d8;color:#616161;font-size:13px;line-height:22px;text-align:center">8</div>
<div class="a" style="left:38px;top:460.0px;width:10.5px;height:10.5px;border-radius:50%;background:#e51400"></div>
<svg style="left:55px;top:457.5px" width="15" height="15"><rect x="0" y="0" width="15" height="15" rx="2.5" fill="#0a64d8"/><path d="M3.2 7.8L6.2 10.8L11.8 4.2" fill="none" stroke="#fff" stroke-width="1.7"/></svg>
<div class="t" style="left:71.5px;top:458.0px;font-size:15.2px;color:#616161">test_freqz_usage_4.m</div>
<div class="t" style="left:238px;top:458.0px;font-size:15.3px;color:#8a8a8a">D:\Users\TR\WX...</div>
<div class="a" style="left:368px;top:455.0px;width:23px;height:22px;border-radius:11px;background:#d8d8d8;color:#616161;font-size:13px;line-height:22px;text-align:center">15</div>
<div class="a" style="left:29px;top:479.5px;width:375px;height:26px;background:#0060c0"></div>
<div class="a" style="left:38px;top:487.0px;width:10.5px;height:10.5px;border-radius:50%;background:#e51400"></div>
<svg style="left:55px;top:484.5px" width="15" height="15"><rect x="0.5" y="0.5" width="14" height="14" rx="2.5" fill="#0a64d8" stroke="#4d8fe0" stroke-width="1"/><path d="M3.2 7.8L6.2 10.8L11.8 4.2" fill="none" stroke="#fff" stroke-width="1.7"/></svg>
<div class="t" style="left:71.5px;top:485.0px;font-size:15.2px;color:#fff">test_freqz_usage_4.m</div>
<div class="t" style="left:238px;top:485.0px;font-size:15.3px;color:#c8d8f0">D:\User...</div>
<div class="a" style="left:366px;top:482.0px;width:23px;height:22px;border-radius:11px;background:#d8d8d8;color:#616161;font-size:13px;line-height:22px;text-align:center">19</div>
<svg style="left:312px;top:484px" width="18" height="17" viewBox="0 0 18 17"><path d="M1.5 15.5L2.5 11.5L12.5 1.5L15.5 4.5L5.5 14.5Z M10.5 3.5L13.5 6.5" fill="none" stroke="#5f87c8" stroke-width="1.2"/></svg>
<svg style="left:340px;top:486px" width="13" height="13"><path d="M0.8 0.8L12.2 12.2M12.2 0.8L0.8 12.2" stroke="#fff" stroke-width="1.5"/></svg>

<svg style="left:38px;top:514px" width="8" height="13"><path d="M1 0.8L6.8 6.5L1 12.2" fill="none" stroke="#424242" stroke-width="1.2"/></svg>
<div class="t" style="left:54px;top:515px;font-size:13px;font-weight:bold;color:#616161">JULIA: COMPILED CODE</div>
<div class="a" style="left:404px;top:187px;width:1381px;height:44px;background:#f3f3f3"></div>
<div class="a" style="left:404px;top:187px;width:152px;height:44px;background:#ececec"></div>
<div class="a" style="left:556px;top:187px;width:227px;height:44px;background:#fff"></div>
<svg style="left:421px;top:202px" width="14" height="13" viewBox="0 0 14 13"><circle cx="7" cy="3.2" r="2.9" fill="#9558b2"/><circle cx="3.2" cy="9.6" r="2.9" fill="#9558b2"/><circle cx="10.8" cy="9.6" r="2.9" fill="#9558b2"/></svg>
<div class="t" style="left:443.5px;top:201.5px;font-size:16px;color:#777">工作空间.jl</div>
<svg style="left:578px;top:202px" width="11" height="12"><path d="M0 1H10.5M0 4.3H7M0 7.6H10.5M0 11H7" stroke="#a8a8a8" stroke-width="1.1"/></svg>
<div class="t" style="left:597px;top:203px;font-size:15.2px;color:#333">test_freqz_usage_4.m</div>
<svg style="left:760px;top:204px" width="11" height="11"><path d="M0.5 0.5L10.5 10.5M10.5 0.5L0.5 10.5" stroke="#424242" stroke-width="1.3"/></svg>
<svg style="left:1652px;top:200px" width="17" height="17" viewBox="0 0 17 17"><rect x="0.7" y="0.7" width="15.6" height="15.6" rx="1.5" fill="none" stroke="#424242" stroke-width="1.3"/><path d="M8.5 0.7V16.3" stroke="#424242" stroke-width="1.3"/></svg>
<svg style="left:1688px;top:202px" width="9" height="14"><path d="M8 0.8L1.2 7L8 13.2" fill="none" stroke="#424242" stroke-width="1.3"/></svg>
<svg style="left:1721px;top:202px" width="9" height="14"><path d="M1 0.8L7.8 7L1 13.2" fill="none" stroke="#424242" stroke-width="1.3"/></svg>
<svg style="left:1749px;top:207px" width="17" height="4"><circle cx="2" cy="2" r="1.4" fill="#424242"/><circle cx="8.3" cy="2" r="1.4" fill="#424242"/><circle cx="14.6" cy="2" r="1.4" fill="#424242"/></svg>
<div class="a" style="left:404px;top:231px;width:1381px;height:961px;background:#fff"></div>
<div class="a" style="left:489px;top:634.96px;width:1296px;height:23.68px;background:#fffdb9"></div>
<div class="a" style="left:489px;top:658.64px;width:289px;height:23.68px;background:#e4e9ef;border-radius:0 4px 4px 0"></div>
<div class="a" style="left:489px;top:659.64px;width:1.5px;height:21.68px;background:#333"></div>
<div class="ln" style="top:234.40px">1</div>
<div class="ln" style="top:258.08px">2</div>
<div class="code" style="top:257.08px"><span class="id">b0</span><span class="pu"> = </span><span class="nu">0.05634</span><span class="pu">;</span></div>
<div class="ln" style="top:281.76px">3</div>
<div class="code" style="top:280.76px"><span class="id">b1</span><span class="pu"> = </span><span class="br">[</span><span class="nu">1</span><span class="pu">  </span><span class="nu">1</span><span class="br">]</span><span class="pu">;</span></div>
<div class="ln" style="top:305.44px">4</div>
<div class="code" style="top:304.44px"><span class="id">b2</span><span class="pu"> = </span><span class="br">[</span><span class="nu">1</span><span class="pu"> -</span><span class="nu">1.0166</span><span class="pu"> </span><span class="nu">1</span><span class="br">]</span><span class="pu">;</span></div>
<div class="ln" style="top:329.12px">5</div>
<div class="code" style="top:328.12px"><span class="id">a1</span><span class="pu"> = </span><span class="br">[</span><span class="nu">1</span><span class="pu"> -</span><span class="nu">0.683</span><span class="br">]</span><span class="pu">;</span></div>
<div class="ln" style="top:352.80px">6</div>
<div class="code" style="top:351.80px"><span class="id">a2</span><span class="pu"> = </span><span class="br">[</span><span class="nu">1</span><span class="pu"> -</span><span class="nu">1.4461</span><span class="pu"> </span><span class="nu">0.7957</span><span class="br">]</span><span class="pu">;</span></div>
<div class="ln" style="top:376.48px">7</div>
<div class="ln" style="top:400.16px">8</div>
<div class="code" style="top:399.16px"><span class="id">b</span><span class="pu"> = </span><span class="id">b0</span><span class="pu">*</span><span class="id">conv</span><span class="br">(</span><span class="id">b1</span><span class="pu">,</span><span class="id">b2</span><span class="br">)</span><span class="pu">;</span></div>
<div class="ln" style="top:423.84px">9</div>
<div class="code" style="top:422.84px"><span class="id">a</span><span class="pu"> = </span><span class="id">conv</span><span class="br">(</span><span class="id">a1</span><span class="pu">,</span><span class="id">a2</span><span class="br">)</span><span class="pu">;</span></div>
<div class="ln" style="top:447.52px">10</div>
<div class="ln" style="top:471.20px">11</div>
<div class="code" style="top:470.20px"><span class="br">[</span><span class="id">h</span><span class="pu">,</span><span class="id">w</span><span class="br">]</span><span class="pu"> = </span><span class="id">freqz</span><span class="br">(</span><span class="id">b</span><span class="pu">,</span><span class="id">a</span><span class="pu">,</span><span class="nu">2001</span><span class="pu">,</span><span class="st">&#x27;whole&#x27;</span><span class="br">)</span><span class="pu">;</span></div>
<div class="ln" style="top:494.88px">12</div>
<div class="code" style="top:493.88px"><span class="id">plot</span><span class="br">(</span><span class="id">w</span><span class="pu">/</span><span class="id">pi</span><span class="pu">,</span><span class="nu">20</span><span class="pu">*</span><span class="id">log10</span><span class="g2">(</span><span class="id">abs</span><span class="g3">(</span><span class="id">h</span><span class="g3">)</span><span class="g2">)</span><span class="br">)</span><span class="pu">;</span></div>
<div class="ln" style="top:518.56px">13</div>
<div class="code" style="top:517.56px"><span class="id">ylim</span><span class="br">(</span><span class="g2">[</span><span class="pu">-</span><span class="nu">100</span><span class="pu"> </span><span class="nu">20</span><span class="g2">]</span><span class="br">)</span><span class="pu">;</span></div>
<div class="ln" style="top:542.24px">14</div>
<div class="code" style="top:541.24px"><span class="id">xlim</span><span class="br">(</span><span class="g2">[</span><span class="nu">0</span><span class="pu"> </span><span class="nu">2</span><span class="g2">]</span><span class="br">)</span><span class="pu">;</span></div>
<div class="ln" style="top:565.92px">15</div>
<div class="code" style="top:564.92px"><span class="id">xlabel</span><span class="br">(</span><span class="st">&#x27;Normalized Frequency </span><span class="g2">(</span><span class="st">$\times$ π rad/sample</span><span class="g2">)</span><span class="st">&#x27;</span><span class="br">)</span><span class="pu">;</span></div>
<div class="ln" style="top:589.60px">16</div>
<div class="code" style="top:588.60px"><span class="id">ylabel</span><span class="br">(</span><span class="st">&#x27;Magnitude </span><span class="g2">(</span><span class="st">dB</span><span class="g2">)</span><span class="st">&#x27;</span><span class="br">)</span><span class="pu">;</span></div>
<div class="ln" style="top:613.28px">17</div>
<div class="ln" style="top:636.96px">18</div>
<div class="code" style="top:635.96px"><span class="kw">function</span><span class="pu"> </span><span class="id">ave</span><span class="pu"> = </span><span class="id">average</span><span class="br">(</span><span class="id">x</span><span class="br">)</span></div>
<div class="ln" style="top:660.64px">19</div>
<div class="code" style="top:659.64px"><span class="ws">····</span><span class="id">ave</span><span class="ws">·</span><span class="pu">=</span><span class="ws">·</span><span class="id">sum</span><span class="br">(</span><span class="id">x</span><span class="g2">(</span><span class="pu">:</span><span class="g2">)</span><span class="br">)</span><span class="pu">/</span><span class="id">numel</span><span class="br">(</span><span class="id">x</span><span class="br">)</span><span class="pu">;</span><span class="ws">·</span></div>
<div class="ln" style="top:684.32px">20</div>
<div class="code" style="top:683.32px"><span class="kw">end</span></div>
<div class="ln" style="top:708.00px">21</div>
<div class="ln" style="top:731.68px">22</div>
<div class="code" style="top:730.68px"><span class="id">z</span><span class="pu"> = </span><span class="nu">1</span><span class="pu">:</span><span class="nu">99</span><span class="pu">;</span></div>
<div class="bp" style="top:310.28px"></div>
<div class="bp" style="top:405.00px"></div>
<div class="bp" style="top:570.76px"></div>
<div class="bp" style="top:665.48px"></div>
<svg style="left:409px;top:639.96px" width="16" height="14" viewBox="0 0 16 14"><path d="M1 1H9L14.5 7L9 13H1Z" fill="none" stroke="#d4930a" stroke-width="1.6" stroke-linejoin="round"/></svg>
<div class="a" style="left:1769px;top:231px;width:1px;height:515px;background:#dddddd"></div>
<div class="a" style="left:1770px;top:431px;width:15px;height:11px;background:#fffdb9"></div>
<div class="a" style="left:1770px;top:441px;width:15px;height:2px;background:#444"></div>
<div class="a" style="left:404px;top:746px;width:1381px;height:446px;background:#fff;border-top:1px solid #d6d6d6"></div>
<div class="t" style="left:428.5px;top:763.5px;font-size:13.5px;color:#777">输出</div>
<div class="t" style="left:486px;top:763.5px;font-size:13.5px;color:#424242">调试控制台</div>
<div class="t" style="left:584.5px;top:763.5px;font-size:13.5px;color:#777">终端</div>
<div class="a" style="left:1141px;top:754px;width:500px;height:30px;background:#fff;border:1px solid #cecece"></div>
<div class="t" style="left:1149px;top:761.5px;font-size:14.8px;color:#858585">筛选器(例如 text、!exclude)</div>
<svg style="left:1651px;top:763px" width="19" height="13" viewBox="0 0 19 13"><path d="M0 1H17M0 5H17M0 9H10M0 12.3H10" stroke="#424242" stroke-width="1.2"/><path d="M12.5 8.5L17 12.8M17 8.5L12.5 12.8" stroke="#424242" stroke-width="1.1"/></svg>
<svg style="left:1683px;top:760px" width="17" height="17"><circle cx="8.5" cy="8.5" r="7.7" fill="none" stroke="#424242" stroke-width="1.2"/><text x="8.5" y="13" text-anchor="middle" font-family="Liberation Sans" font-size="12" fill="#424242">?</text></svg>
<svg style="left:1718px;top:763px" width="15" height="9"><path d="M0.8 8.2L7.5 1.2L14.2 8.2" fill="none" stroke="#424242" stroke-width="1.3"/></svg>
<svg style="left:1750px;top:762px" width="13" height="13"><path d="M0.5 0.5L12.5 12.5M12.5 0.5L0.5 12.5" stroke="#424242" stroke-width="1.3"/></svg>
<svg style="left:411px;top:797.0px" width="10" height="7"><path d="M0 3.5H8.5M5.5 0.8L8.8 3.5L5.5 6.2" fill="none" stroke="#c0c0c0" stroke-width="1"/></svg>
<div class="t" style="left:442px;top:791.0px;font-size:18px;line-height:24.5px;color:#424242">ave</div>
<div class="t" style="left:442px;top:815.5px;font-family:'Liberation Mono',monospace;font-size:16px;line-height:24.5px;color:#7a7a7a;white-space:pre">ave =</div>
<div class="t" style="left:442px;top:842.0px;font-family:'Liberation Mono',monospace;font-size:16px;line-height:24.5px;color:#7a7a7a;white-space:pre">    50</div>
<svg style="left:411px;top:895.0px" width="10" height="7"><path d="M0 3.5H8.5M5.5 0.8L8.8 3.5L5.5 6.2" fill="none" stroke="#c0c0c0" stroke-width="1"/></svg>
<div class="t" style="left:442px;top:889.0px;font-size:18px;line-height:24.5px;color:#424242">ave+2</div>
<div class="t" style="left:442px;top:913.5px;font-family:'Liberation Mono',monospace;font-size:16px;line-height:24.5px;color:#7a7a7a;white-space:pre">ans =</div>
<div class="t" style="left:442px;top:940.0px;font-family:'Liberation Mono',monospace;font-size:16px;line-height:24.5px;color:#7a7a7a;white-space:pre">    52</div>
<div class="a" style="left:404px;top:1167px;width:1381px;height:1px;background:#d6d6d6"></div>
<svg style="left:420px;top:1175px" width="9" height="13"><path d="M1 0.8L7.5 6.5L1 12.2" fill="none" stroke="#424242" stroke-width="1.4"/></svg>
<div class="a" style="left:2px;top:1192px;width:1783px;height:26px;background:#cc6633;border-radius:0 0 8px 8px"></div>
<svg style="left:18px;top:1196px" width="20" height="18" viewBox="0 0 20 18">
 <path d="M8 8V2L18.6 9.2L12 13.7" fill="none" stroke="#fff" stroke-width="1.3" stroke-linejoin="miter"/>
 <ellipse cx="6.1" cy="13.7" rx="2.4" ry="3" fill="none" stroke="#fff" stroke-width="1.2"/>
 <path d="M1.8 10.6L3.6 11.8M10.4 10.6L8.6 11.8M1.6 13.7H3.4M10.6 13.7H8.8M1.8 16.8L3.6 15.6M10.4 16.8L8.6 15.6" stroke="#fff" stroke-width="1.1"/>
</svg>
<svg style="left:58px;top:1198px" width="15" height="15" viewBox="0 0 15 15"><path d="M2.2 9.5A5.5 5.5 0 0 1 11.8 3.2M12.8 5.5A5.5 5.5 0 0 1 3.2 11.8" fill="none" stroke="#fff" stroke-width="1.5"/><path d="M9.5 1.5L12.5 3.5L11 6.5M5.5 13.5L2.5 11.5L4 8.5" fill="none" stroke="#fff" stroke-width="1.4"/></svg>
<div class="t" style="left:79px;top:1197.5px;font-size:15.5px;color:#fff;transform:scaleX(0.91);transform-origin:0 0">Julia: Evaluating...</div>
<div class="t" style="left:214px;top:1197.5px;font-size:15.5px;color:#fff;transform:scaleX(0.91);transform-origin:0 0">Julia env: v1.9</div>
<div class="t" style="left:324.5px;top:1197.5px;font-size:15px;color:#fff">已在调试器中暂停</div>
<div class="t" style="left:1330px;top:1197.5px;font-size:15px;color:#fff">行 19，列 31 (已选择30)</div>
<div class="t" style="left:1510px;top:1197.5px;font-size:15px;color:#fff">空格: 4</div>
<div class="t" style="left:1576px;top:1197.5px;font-size:15.5px;color:#fff;transform:scaleX(0.91);transform-origin:0 0">UTF-8</div>
<div class="t" style="left:1635px;top:1197.5px;font-size:15.5px;color:#fff;transform:scaleX(0.91);transform-origin:0 0">CRLF</div>
<div class="t" style="left:1688.5px;top:1197.5px;font-size:15.5px;color:#fff;transform:scaleX(0.91);transform-origin:0 0">mlang</div>
<svg style="left:1751px;top:1196px" width="18" height="18" viewBox="0 0 18 18"><path d="M8 3C4.5 3 3 5.5 3 8.5V12.5L0.8 15H14.5L12.2 12.5V10" fill="none" stroke="#fff" stroke-width="1.3"/><path d="M5.5 15.5C5.8 17 9.5 17 9.8 15.5Z" fill="#fff"/><circle cx="12.5" cy="4" r="3.2" fill="#fff"/></svg>
</body></html>
